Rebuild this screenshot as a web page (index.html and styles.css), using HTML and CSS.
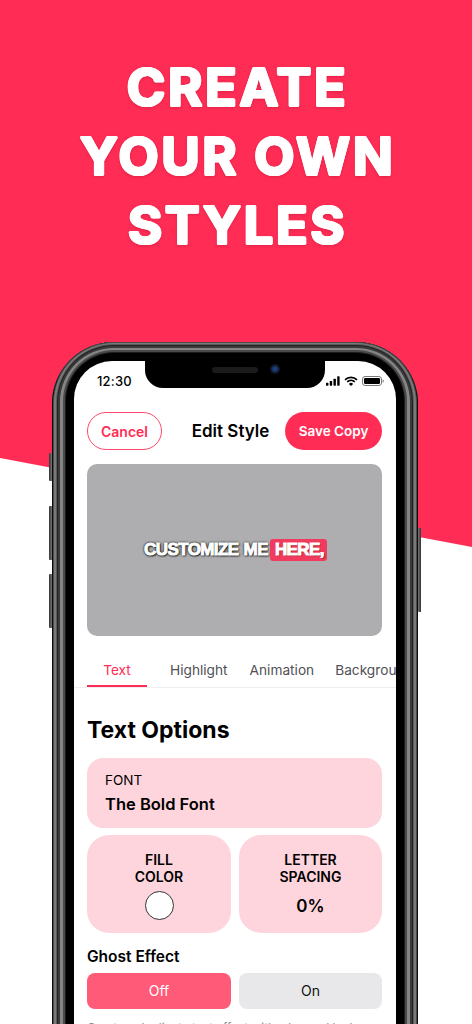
FILE: index.html
```html
<!DOCTYPE html>
<html lang="en">
<head>
<meta charset="utf-8">
<title>Create your own styles</title>
<link rel="stylesheet" href="styles.css">
</head>
<body>
<main class="page">
  <div class="wedge"></div>
  <h1 class="headline">CREATE<br>YOUR OWN<br>STYLES</h1>
  <div class="phone">
    <span class="btn-side btn-mute"></span>
    <span class="btn-side btn-up"></span>
    <span class="btn-side btn-down"></span>
    <span class="btn-side btn-power"></span>
    <div class="frame">
      <div class="screen">
        <div class="notch">
          <span class="speaker"></span>
          <span class="camera"></span>
        </div>
        <div class="status">
          <span class="time">12:30</span>
          <span class="status-icons">
            <svg class="ico-signal" width="14" height="10" viewBox="0 0 15 10"><rect x="0" y="7" width="2.6" height="3" rx=".6"/><rect x="4" y="5" width="2.6" height="5" rx=".6"/><rect x="8" y="2.6" width="2.6" height="7.4" rx=".6"/><rect x="12" y="0" width="2.600" height="10" rx=".6"/></svg>
            <svg class="ico-wifi" width="14" height="10" viewBox="0 0 14 10"><path d="M7 10L4.900 7.900a3 3 0 0 1 4.200 0z" fill="#000"/><path d="M1 3.800a8.600 8.600 0 0 1 12 0M3.200 5.900a5.500 5.500 0 0 1 7.600 0" fill="none" stroke="#000" stroke-width="1.700"/></svg>
            <svg class="ico-battery" width="22" height="10" viewBox="0 0 22 10"><rect x=".5" y=".5" width="19" height="9" rx="2.600" fill="none" stroke="#777"/><rect x="2" y="2" width="16" height="6" rx="1.300" fill="#000"/><path d="M20.600 3.400c.8.2 1.200.8 1.200 1.600s-.4 1.400-1.200 1.600z" fill="#777"/></svg>
          </span>
        </div>
        <header class="nav">
          <button class="pill pill-outline">Cancel</button>
          <span class="nav-title">Edit Style</span>
          <button class="pill pill-solid">Save Copy</button>
        </header>
        <div class="preview">
          <span class="caption">CUSTOMIZE ME<span class="caption-hl">HERE,</span></span>
        </div>
        <nav class="tabs">
          <span class="tab tab-active">Text</span>
          <span class="tab tab-highlight">Highlight</span>
          <span class="tab tab-animation">Animation</span>
          <span class="tab tab-background">Background</span>
        </nav>
        <section class="options">
          <h2 class="options-title">Text Options</h2>
          <div class="card card-font">
            <div class="font-label">FONT</div>
            <div class="font-name">The Bold Font</div>
          </div>
          <div class="grid">
            <div class="card card-small">
              <div class="small-label">FILL<br>COLOR</div>
              <span class="swatch"></span>
            </div>
            <div class="card card-small">
              <div class="small-label">LETTER<br>SPACING</div>
              <div class="small-value">0%</div>
            </div>
          </div>
          <h3 class="ghost-title">Ghost Effect</h3>
          <div class="grid">
            <div class="seg seg-on">Off</div>
            <div class="seg seg-off">On</div>
          </div>
          <p class="hint">Create a duplicate text effect with a layered look</p>
        </section>
      </div>
    </div>
  </div>
</main>
</body>
</html>
```
FILE: styles.css
```css
* { box-sizing: border-box; }
html, body { margin: 0; padding: 0; background: #fff; }
.page {
  position: relative;
  width: 472px;
  height: 1024px;
  overflow: hidden;
  background: #fff;
  font-family: Inter, "Liberation Sans", sans-serif;
}
.wedge {
  position: absolute;
  inset: 0;
  background: #ff2d55;
  clip-path: polygon(0 0, 472px 0, 472px 547px, 0 458px);
}
.headline {
  position: relative;
  margin: 0;
  padding: 53px 0 0 3px;
  height: 342px;
  color: #fff;
  font-family: Inter, sans-serif;
  font-weight: 700;
  font-size: 52.500px;
  line-height: 69px;
  letter-spacing: 2.500px;
  text-align: center;
  text-shadow:
    1.3px 0 0 #fff, -1.3px 0 0 #fff, 0 1.3px 0 #fff, 0 -1.3px 0 #fff,
    .9px .9px 0 #fff, -.9px .9px 0 #fff, .9px -.9px 0 #fff, -.9px -.9px 0 #fff;
  filter: drop-shadow(0 1.500px 1.500px rgba(130, 0, 35, .25));
}
.phone {
  position: relative;
  width: 366px;
  height: 760px;
  margin-left: 52px;
}
.frame {
  width: 366px;
  height: 760px;
  padding: 19px 22px 0;
  border-radius: 62px 62px 0 0;
  background: #000;
  box-shadow:
    inset 0 -1px 0 1px #0c0c0c,
    inset 0 -1px 0 2px #4c4c4c,
    inset 0 -2px 0 4px #7a7a7a,
    inset 0 -2px 0 5px #5c5c5c,
    inset 0 -2px 0 6px #222,
    inset 0 -2px 0 8px #3a3a3a,
    inset 0 -3px 0 11px #858585,
    inset 0 -3px 0 13px #4a4a4a,
    inset 0 -3px 0 14px #1c1c1c;
}
.btn-side {
  position: absolute;
  width: 3px;
  background: linear-gradient(90deg, #333, #777);
  border-radius: 1px 0 0 1px;
}
.btn-mute { left: -3px; top: 111px; height: 28px; }
.btn-up { left: -3px; top: 164px; height: 54px; }
.btn-down { left: -3px; top: 232px; height: 54px; }
.btn-power {
  left: auto;
  right: -3px;
  top: 186px;
  height: 84px;
  background: linear-gradient(90deg, #777, #333);
}
.screen {
  position: relative;
  height: 741px;
  border-radius: 38px 38px 0 0;
  background: #fff;
  overflow: hidden;
  color: #000;
}
.notch {
  position: absolute;
  top: 0;
  left: 71px;
  width: 180px;
  height: 27px;
  background: #000;
  border-radius: 0 0 18px 18px;
}
.speaker {
  position: absolute;
  left: 67px;
  top: 6px;
  width: 46px;
  height: 6px;
  border-radius: 3px;
  background: #1b1b1b;
}
.camera {
  position: absolute;
  left: 125px;
  top: 3px;
  width: 10px;
  height: 10px;
  border-radius: 50%;
  background: radial-gradient(circle, #1c3f7a 0 25%, #0c1420 60%);
}
.status {
  display: flex;
  justify-content: space-between;
  align-items: center;
  height: 40px;
  padding: 0 12px 0 23px;
  margin-bottom: 11px;
}
.time { font-size: 13px; font-weight: 500; letter-spacing: .2px; }
.status-icons { display: flex; align-items: center; gap: 4px; }
.nav {
  display: flex;
  justify-content: space-between;
  align-items: center;
  padding: 0 14px 0 13px;
}
.pill {
  height: 38px;
  border-radius: 19px;
  font-family: inherit;
  font-size: 14px;
  font-weight: 600;
  padding: 0;
}
.pill-outline {
  width: 75px;
  border: 1.500px solid #ff4a6d;
  background: #fff;
  color: #ff2d55;
}
.pill-solid {
  width: 97px;
  border: 0;
  background: #ff2d55;
  color: #fff;
  font-size: 13.500px;
}
.nav-title { font-size: 17px; font-weight: 600; margin-left: 14px; }
.preview {
  margin: 14px 14px 0 13px;
  height: 172px;
  border-radius: 10px;
  background: #aeaeb0;
  display: flex;
  align-items: center;
  justify-content: center;
}
.caption {
  display: flex;
  align-items: center;
  margin-left: 2px;
  color: #fff;
  font-family: "Liberation Sans", sans-serif;
  font-weight: 700;
  font-size: 17px;
  letter-spacing: -.6px;
  word-spacing: 1px;
  -webkit-text-stroke: 1px #fff;
  text-shadow: 0 0 1px #000, 0 0 2px #000, 0 0 3px #111, 1px 1px 2px #000;
}
.caption-hl {
  display: block;
  height: 22px;
  line-height: 22px;
  margin-left: 2px;
  background: #f13b5e;
  border-radius: 3px;
  padding: 0 3px 0 5px;
  text-shadow: 0 0 1px #800, 1px 1px 1px #800;
}
.tabs {
  display: flex;
  height: 35px;
  margin-top: 17px;
  padding-left: 13px;
  border-bottom: 1px solid #eeeef0;
  overflow: hidden;
  font-size: 13.700px;
  color: #505055;
  white-space: nowrap;
}
.tab { line-height: 34px; display: block; flex: none; height: 34px; }
.tab-active {
  width: 60px;
  text-align: center;
  color: #ff2d55;
  border-bottom: 2px solid #ff2d55;
}
.tab-highlight { margin-left: 23px; }
.tab-animation { margin-left: 22px; }
.tab-background { margin-left: 21px; }
.options { padding: 27px 14px 0 13px; }
.options-title { margin: 0 0 13px; font-size: 23px; line-height: 30px; font-weight: 700; }
.card { background: #ffd5dd; }
.card-font {
  height: 70px;
  border-radius: 16px;
  padding: 13px 18px 0;
  margin-bottom: 7px;
}
.font-label { font-size: 13.500px; line-height: 18px; font-weight: 400; }
.font-name { font-size: 16.500px; line-height: 20px; font-weight: 600; margin-top: 5px; }
.grid { display: grid; grid-template-columns: 144px 143px; gap: 8px; }
.card-small {
  height: 98px;
  border-radius: 22px;
  padding-top: 16px;
  text-align: center;
}
.small-label { font-size: 14px; line-height: 17px; font-weight: 600; }
.swatch {
  display: block;
  width: 29px;
  height: 29px;
  margin: 6px auto 0;
  border-radius: 50%;
  background: #fff;
  border: 1px solid #333;
}
.small-value { font-size: 17px; line-height: 22px; font-weight: 600; margin-top: 10px; }
.ghost-title { margin: 14px 0 6px; font-size: 15.500px; line-height: 20px; font-weight: 600; }
.seg {
  height: 36px;
  border-radius: 8px;
  text-align: center;
  line-height: 36px;
  font-size: 14px;
}
.seg-on { background: #ff5a78; color: #fff; }
.seg-off { background: #e8e8eb; color: #111; }
.hint { margin: 11px 0 0; font-size: 11.800px; line-height: 16px; color: #8a8a8e; white-space: nowrap; }
```
